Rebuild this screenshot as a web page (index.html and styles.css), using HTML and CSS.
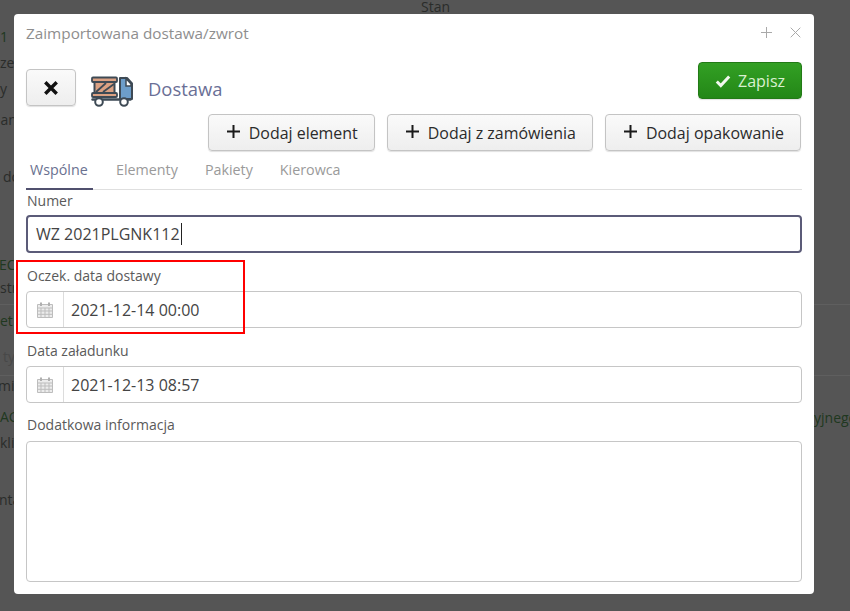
FILE: index.html
```html
<!DOCTYPE html>
<html lang="pl">
<head>
<meta charset="utf-8">
<title>Zaimportowana dostawa/zwrot</title>
<link rel="stylesheet" href="styles.css">
</head>
<body>
<div class="page" aria-hidden="true">
  <div class="bg-stan">Stan</div>
  <div class="bg-row r1 green">21</div>
  <div class="bg-row r2">zen</div>
  <div class="bg-row r3">y</div>
  <div class="bg-row r4">ian</div>
  <div class="bg-row r5">do</div>
  <div class="bg-row r6 green">EC</div>
  <div class="bg-row r7">str</div>
  <div class="bg-row r8 green">et</div>
  <div class="bg-row r9 faint">ty</div>
  <div class="bg-row r10">mi</div>
  <div class="bg-row r11 green">AG</div>
  <div class="bg-row r12">klie</div>
  <div class="bg-row r13">nta</div>
  <div class="bg-line l1"></div>
  <div class="bg-line l2"></div>
  <div class="bg-right green">yjnego</div>
</div>
<div class="modal">
  <header class="modal-head">
    <span class="modal-title">Zaimportowana dostawa/zwrot</span>
    <span class="win-icons">
      <svg class="win-icon" viewBox="0 0 11 11"><path d="M5.5 0v11M0 5.5h11"/></svg>
      <svg class="win-icon" viewBox="0 0 11 11"><path d="M.7.7l9.6 9.6M10.3.7L.7 10.3"/></svg>
    </span>
  </header>
  <div class="toolbar">
    <button class="btn btn-close" type="button">
      <svg class="x-icon" viewBox="0 0 14 14"><path d="M2 2l10 10M12 2L2 12"/></svg>
    </button>
    <svg class="truck" viewBox="0 0 42 32">
      <path d="M29 3h7l5 5.500V24H29z" fill="#6d9dc9" stroke="#3e4a55" stroke-width="2" stroke-linejoin="round"/>
      <path d="M35 3.500l5 5.500v2h-5z" fill="#fff" stroke="#3e4a55" stroke-width="1.500"/>
      <rect x="3.500" y="7" width="20" height="11" fill="#dba183"/>
      <path d="M3.500 7v11M23.500 7v11" stroke="#3e4a55" stroke-width="2"/>
      <path d="M5 17L15 8M12 17L23 9" stroke="#3e4a55" stroke-width="1.800" fill="none"/>
      <rect x="1" y="2.500" width="25" height="4.500" rx="1" fill="#dba183" stroke="#3e4a55" stroke-width="1.800"/>
      <rect x="1" y="18" width="25" height="4" rx="1" fill="#dba183" stroke="#3e4a55" stroke-width="1.800"/>
      <path d="M1.500 24.500h38" stroke="#3e4a55" stroke-width="2.400" stroke-linecap="round"/>
      <circle cx="8" cy="27" r="3.800" fill="#fff" stroke="#3e4a55" stroke-width="2"/>
      <circle cx="33" cy="27" r="3.800" fill="#fff" stroke="#3e4a55" stroke-width="2"/>
    </svg>
    <span class="doc-type">Dostawa</span>
    <button class="btn btn-save" type="button">
      <svg class="check" viewBox="0 0 16 14"><path d="M1.800 7.500l4 4 8.400-9"/></svg>Zapisz
    </button>
  </div>
  <div class="actions">
    <button class="btn btn-add" type="button"><svg class="plus" viewBox="0 0 13 13"><path d="M6.500 0v13M0 6.500h13"/></svg>Dodaj element</button>
    <button class="btn btn-add" type="button"><svg class="plus" viewBox="0 0 13 13"><path d="M6.500 0v13M0 6.500h13"/></svg>Dodaj z zamówienia</button>
    <button class="btn btn-add" type="button"><svg class="plus" viewBox="0 0 13 13"><path d="M6.500 0v13M0 6.500h13"/></svg>Dodaj opakowanie</button>
  </div>
  <nav class="tabs">
    <span class="tab active">Wspólne</span>
    <span class="tab">Elementy</span>
    <span class="tab">Pakiety</span>
    <span class="tab">Kierowca</span>
  </nav>
  <div class="form">
    <div class="field field-number">
      <div class="label">Numer</div>
      <div class="input focus">WZ 2021PLGNK112<span class="caret"></span></div>
    </div>
    <div class="field field-date highlighted">
      <div class="label">Oczek. data dostawy</div>
      <div class="input date">
        <span class="addon"><svg class="cal" viewBox="0 0 16 16"><path class="cal-fill" d="M.5 2.500h15v13H.500z"/><path class="cal-line" d="M.5 2.500h15v13H.500zM.5 6h15M.5 9h15M.5 12.300h15M4 6v9.500M8 6v9.500M12 6v9.500"/><path class="cal-ring" d="M4 .5v3.500M12 .5v3.500"/></svg></span>
        <span class="value">2021-12-14 00:00</span>
      </div>
      <div class="marker"></div>
    </div>
    <div class="field field-date">
      <div class="label">Data załadunku</div>
      <div class="input date">
        <span class="addon"><svg class="cal" viewBox="0 0 16 16"><path class="cal-fill" d="M.5 2.500h15v13H.500z"/><path class="cal-line" d="M.5 2.500h15v13H.500zM.5 6h15M.5 9h15M.5 12.300h15M4 6v9.500M8 6v9.500M12 6v9.500"/><path class="cal-ring" d="M4 .5v3.500M12 .5v3.500"/></svg></span>
        <span class="value">2021-12-13 08:57</span>
      </div>
    </div>
    <div class="field field-info">
      <div class="label">Dodatkowa informacja</div>
      <div class="textarea"></div>
    </div>
  </div>
</div>
</body>
</html>
```
FILE: styles.css
```css
* { box-sizing: border-box; }
html, body { margin: 0; height: 100%; }
body {
  width: 850px;
  height: 611px;
  overflow: hidden;
  background: #555;
  font-family: "Open Sans", sans-serif;
  position: relative;
}
.page { position: absolute; inset: 0; color: #2a2c2a; font-size: 14px; line-height: 20px; }
.bg-stan { position: absolute; left: 421px; top: -3px; }
.bg-row { position: absolute; left: 0; width: 14px; overflow: hidden; white-space: nowrap; }
.bg-right { position: absolute; left: 814px; top: 408px; }
.green { color: #203820; }
.faint { color: #484848; }
.r1 { top: 27px; text-indent: -8px; } .r2 { top: 53px; } .r3 { top: 79px; } .r4 { top: 110px; text-indent: -3px; }
.r5 { top: 167px; text-indent: 3px; } .r6 { top: 255px; text-indent: -1px; } .r7 { top: 278px; } .r8 { top: 311px; }
.r9 { top: 347px; text-indent: 3px; } .r10 { top: 376px; text-indent: -2px; } .r11 { top: 407px; } .r12 { top: 433px; } .r13 { top: 490px; text-indent: -1px; }
.bg-line { position: absolute; left: 0; right: 0; height: 1px; background: #5f5f5f; }
.l1 { top: 304px; } .l2 { top: 375px; }

.modal {
  position: absolute;
  left: 14px; top: 14px;
  width: 800px; height: 580px;
  background: #fff;
  border-radius: 4px;
  padding: 0 12px;
  display: flex;
  flex-direction: column;
}
.modal-head { display: flex; justify-content: space-between; align-items: center; height: 38px; }
.modal-title { font-size: 15.3px; color: #8e8e8e; }
.win-icons { display: flex; gap: 18px; margin-right: 1px; margin-top: -1px; }
.win-icon { width: 11px; height: 11px; fill: none; stroke: #a9a9a9; stroke-width: 1; display: block; }

.btn {
  font-family: inherit;
  border: 1px solid #c4c4c4;
  border-radius: 4px;
  background: linear-gradient(#fafafa, #eeeeee);
  box-shadow: 0 1px 1px rgba(0,0,0,.12);
  color: #222;
  font-size: 16px;
  padding: 0;
  display: inline-flex;
  align-items: center;
  justify-content: center;
}
.toolbar { display: flex; align-items: flex-start; height: 52px; margin-top: 10px; }
.btn-close { width: 50px; height: 37px; margin-top: 7px; }
.x-icon { width: 16px; height: 16px; fill: none; stroke: #111; stroke-width: 3; }
.truck { width: 42px; height: 32px; margin-left: 15px; margin-top: 13px; }
.doc-type { font-size: 18.4px; line-height: 26px; color: #6a6f96; margin-left: 15px; margin-top: 14px; }
.btn-save {
  margin-left: auto;
  width: 104px; height: 37px;
  background: linear-gradient(#33a024, #238717);
  border-color: #227a16;
  color: #d9f0d0;
}
.check { width: 16px; height: 14px; fill: none; stroke: #f2f8ee; stroke-width: 3; margin-right: 7px; }

.actions { display: flex; justify-content: flex-end; gap: 12px; padding-right: 1px; }
.btn-add { height: 37px; color: #2b2b2b; padding: 0 16px 0 18px; font-size: 15.95px; }
.plus { width: 13px; height: 13px; fill: none; stroke: #1a1a1a; stroke-width: 2; margin-right: 9px; margin-top: -2px; }

.tabs { display: flex; height: 39px; border-bottom: 1px solid #dfdfdf; align-items: stretch; flex: none; }
.tab { font-size: 14.3px; color: #9a9a9a; padding: 9px 13px 0 14px; }
.tab:first-child { padding-left: 4px; padding-right: 4px; width: 67px; }
.tab.active { color: #6a7190; border-bottom: 2px solid #50506e; margin-bottom: -1px; }
.tab:nth-child(2) { padding-left: 23px; }

.form { display: flex; flex-direction: column; }
.label { font-size: 14px; line-height: 20px; color: #5a5a5a; padding-left: 1px; }
.field { position: relative; }
.field-number { margin-top: 1px; }
.input {
  height: 37px;
  border: 1px solid #c6c6c6;
  border-radius: 4px;
  font-size: 16px;
  color: #444;
  display: flex;
  align-items: center;
  margin-top: 5px;
}
.input.focus { border: 2px solid #5b5b78; padding-left: 8px; height: 38px; margin-top: 4px; }
.caret { width: 1px; height: 22px; background: #222; margin-left: 1px; }
.field-date { margin-top: 13px; }
.addon { width: 37px; height: 100%; display: flex; align-items: center; justify-content: center; border-right: 1px solid #dcdcdc; }
.value { padding-left: 7px; }
.cal { width: 16px; height: 16px; fill: none; }
.cal-fill { fill: #ececec; }
.cal-line { stroke: #bdbdbd; stroke-width: 1; fill: none; }
.cal-ring { stroke: #b0b0b0; stroke-width: 2; }
.marker {
  position: absolute;
  left: -10px; top: -6px;
  width: 229px; height: 74px;
  border: 2px solid #f00;
  pointer-events: none;
}
.field-info { margin-top: 12px; }
.textarea { height: 141px; border: 1px solid #c6c6c6; border-radius: 4px; margin-top: 6px; }
```
